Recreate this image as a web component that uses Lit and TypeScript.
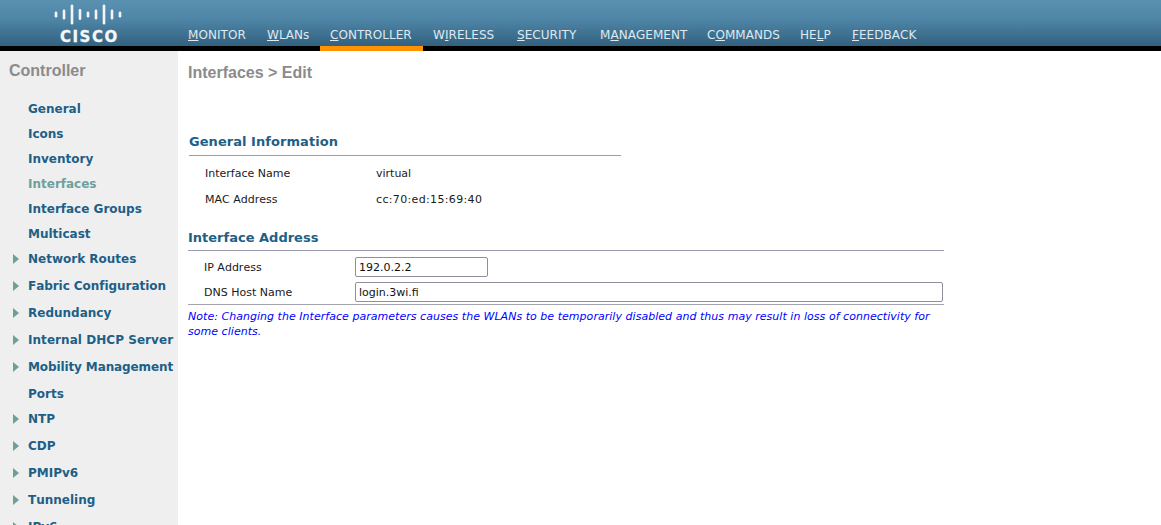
import { LitElement, html, css, svg } from "lit";
import { customElement } from "lit/decorators.js";

const NAV: [string, string, string, number][] = [
  ["", "M", "ONITOR", 79],
  ["", "W", "LANs", 63],
  ["", "C", "ONTROLLER", 103],
  ["W", "I", "RELESS", 84],
  ["", "S", "ECURITY", 83],
  ["M", "A", "NAGEMENT", 107],
  ["C", "O", "MMANDS", 93],
  ["HE", "L", "P", 52],
  ["", "F", "EEDBACK", 80],
];

const SIDE: [string, boolean, string][] = [
  ["General", false, ""],
  ["Icons", false, ""],
  ["Inventory", false, ""],
  ["Interfaces", false, "current"],
  ["Interface Groups", false, ""],
  ["Multicast", false, ""],
  ["Network Routes", true, ""],
  ["Fabric Configuration", true, "tight"],
  ["Redundancy", true, ""],
  ["Internal DHCP Server", true, "loose"],
  ["Mobility Management", true, "tighter"],
  ["Ports", false, ""],
  ["NTP", true, ""],
  ["CDP", true, ""],
  ["PMIPv6", true, ""],
  ["Tunneling", true, ""],
  ["IPv6", true, ""],
];

const BARS: [number, number][] = [
  [56, 6], [64, 10], [72, 20], [80, 11], [88, 6], [96, 10], [104, 20], [112, 10], [120, 6],
];

@customElement("app-root")
export class AppRoot extends LitElement {
  static styles = css`
    :host {
      display: block;
      height: 100vh;
      overflow: hidden;
      background: #fff;
      font-family: "DejaVu Sans", Verdana, sans-serif;
      font-size: 11px;
      font-kerning: none;
      color: #1a1a1a;
    }
    .header {
      display: flex;
      height: 46px;
      background: linear-gradient(#5a91b1 0%, #4f86a7 40%, #33617f 100%);
      border-bottom: 5px solid #000;
    }
    .logo {
      width: 178px;
      flex: none;
      position: relative;
    }
    .logo svg {
      display: block;
    }
    .logo-text {
      position: absolute;
      left: 60px;
      top: 28px;
      font: bold 15px/18px "DejaVu Sans", sans-serif;
      letter-spacing: 1.5px;
      -webkit-text-stroke: 0.3px #f4f7f9;
      color: #f4f7f9;
    }
    .nav {
      display: flex;
      align-items: stretch;
    }
    .nav-item {
      box-sizing: border-box;
      padding: 28px 0 0 10px;
      font-size: 12px;
      line-height: 15px;
      letter-spacing: 0.05px;
      color: #dfe9f0;
      position: relative;
      white-space: nowrap;
    }
    .nav-item.active::after {
      content: "";
      position: absolute;
      left: 0;
      right: 0;
      bottom: -5px;
      height: 5px;
      background: #ff9200;
    }
    .body {
      display: flex;
      height: calc(100vh - 51px);
    }
    .side {
      width: 178px;
      flex: none;
      background: #efefef;
      overflow: hidden;
    }
    .side-title {
      height: 45px;
      padding: 10px 0 0 9px;
      box-sizing: border-box;
      font: bold 16px/20px "Liberation Sans", Arial, sans-serif;
      color: #8b8b8b;
    }
    .side-row {
      display: flex;
      align-items: center;
      height: 25px;
      padding-left: 13px;
      font-weight: bold;
      font-size: 12px;
      color: #1e5f87;
      white-space: nowrap;
    }
    .side-row.arrow {
      margin-bottom: 2px;
    }
    .side-row.current {
      color: #6f9f9b;
    }
    .side-row.tight {
      letter-spacing: -0.05px;
    }
    .side-row.tighter {
      letter-spacing: -0.11px;
    }
    .side-row.loose {
      letter-spacing: 0.05px;
    }
    .arrow-icon {
      width: 15px;
      flex: none;
      display: flex;
    }
    .main {
      flex: 1;
      padding: 12px 0 0 10px;
      min-width: 0;
    }
    .title {
      font: bold 16px/20px "Liberation Sans", Arial, sans-serif;
      color: #8b8b8b;
      height: 20px;
    }
    .general {
      width: 432px;
      margin: 51px 0 0 1px;
    }
    .section-head {
      font-weight: bold;
      font-size: 13px;
      line-height: 16px;
      color: #1e5f87;
      padding-bottom: 5px;
      border-bottom: 1px solid #9a9abb;
    }
    .general .section-head {
      letter-spacing: 0.05px;
    }
    .info-row {
      display: grid;
      grid-template-columns: 171px 1fr;
      padding-left: 16px;
      line-height: 14px;
    }
    .info-row.first {
      margin-top: 11px;
    }
    .info-row.second {
      margin-top: 12px;
    }
    .mac {
      letter-spacing: 0.35px;
    }
    .address {
      width: 756px;
      margin-top: 23px;
    }
    .address .section-head {
      padding-bottom: 4px;
      border-bottom-color: #9a9aab;
    }
    .form-row {
      display: grid;
      grid-template-columns: 151px 1fr;
      align-items: center;
      padding-left: 16px;
      margin-top: 5px;
      height: 20px;
    }
    .form-row.first {
      margin-top: 6px;
    }
    .field {
      box-sizing: border-box;
      display: block;
      height: 20px;
      margin: 0;
      padding: 0 3px;
      border: 1px solid #8f8f9d;
      border-radius: 2px;
      background: #fff;
      font: 11px "DejaVu Sans", Verdana, sans-serif;
      color: #111;
      outline: none;
    }
    .field.short {
      width: 133px;
    }
    .field.long {
      width: 588px;
    }
    .rule {
      border-top: 1px solid #a4a4b0;
      margin-top: 2px;
    }
    .note {
      margin-top: 4px;
      font-style: italic;
      line-height: 15px;
      letter-spacing: 0.035px;
      color: #0000ff;
    }
  `;

  render() {
    return html`
      <div class="header">
        <div class="logo">
          <svg width="178" height="30" viewBox="0 0 178 30" aria-hidden="true">
            ${BARS.map(
              ([x, h]) =>
                svg`<rect x=${x - 1.3} y=${14.5 - h / 2} width="2.6" height=${h} rx="1.3" fill="#f2f6f8"></rect>`
            )}
          </svg>
          <span class="logo-text">CISCO</span>
        </div>
        <div class="nav">
          ${NAV.map(
            ([a, u, b, w]) =>
              html`<div class="nav-item ${b === "ONTROLLER" ? "active" : ""}" style="width:${w}px">${a}<u>${u}</u>${b}</div>`
          )}
        </div>
      </div>
      <div class="body">
        <div class="side">
          <div class="side-title">Controller</div>
          ${SIDE.map(
            ([label, arrow, cls]) => html`
              <div class="side-row ${arrow ? "arrow" : ""} ${cls}">
                <span class="arrow-icon">
                  ${arrow
                    ? html`<svg width="6" height="10" viewBox="0 0 6 10"><path d="M0 0 L6 5 L0 10 Z" fill="#6f9f9b"></path></svg>`
                    : ""}
                </span>
                ${label}
              </div>
            `
          )}
        </div>
        <div class="main">
          <div class="title">Interfaces &gt; Edit</div>
          <div class="general">
            <div class="section-head">General Information</div>
            <div class="info-row first"><span>Interface Name</span><span>virtual</span></div>
            <div class="info-row second"><span>MAC Address</span><span class="mac">cc:70:ed:15:69:40</span></div>
          </div>
          <div class="address">
            <div class="section-head">Interface Address</div>
            <div class="form-row first">
              <span>IP Address</span>
              <input class="field short" .value=${"192.0.2.2"} />
            </div>
            <div class="form-row">
              <span>DNS Host Name</span>
              <input class="field long" .value=${"login.3wi.fi"} />
            </div>
            <div class="rule"></div>
            <div class="note">Note: Changing the Interface parameters causes the WLANs to be temporarily disabled and thus may result in loss of connectivity for some clients.</div>
          </div>
        </div>
      </div>
    `;
  }
}
